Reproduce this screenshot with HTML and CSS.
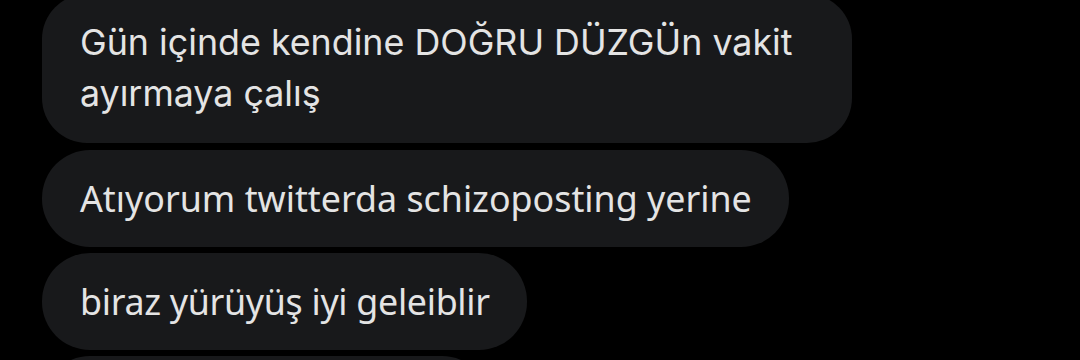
FILE: index.html
```html
<!DOCTYPE html>
<html lang="tr">
<head>
    <meta charset="UTF-8">
    <title>Mesajlar</title>
    <link rel="stylesheet" href="styles.css">
</head>
<body>
    <div class="thread">
        <div class="bubble bubble-first">Gün içinde kendine DOĞRU DÜZGÜn vakit<br>ayırmaya çalış</div>
        <div class="bubble">Atıyorum twitterda schizoposting yerine</div>
        <div class="bubble bubble-short">biraz yürüyüş iyi geleiblir</div>
        <div class="bubble bubble-cut"></div>
    </div>
</body>
</html>
```

FILE: styles.css
```css
* {
    margin: 0;
    padding: 0;
    box-sizing: border-box;
}

body {
    background: #000;
    height: 360px;
    overflow: hidden;
    font-family: "Noto Sans", sans-serif;
}

.thread {
    display: flex;
    flex-direction: column;
    align-items: flex-start;
    gap: 6px;
    margin-top: -6px;
    padding-left: 42px;
}

.bubble {
    background: #18191b;
    color: #e4e4e4;
    font-size: 35.8px;
    line-height: 51px;
    padding: 23px 37px 23px 38px;
    border-radius: 48px;
}

.bubble-first {
    font-family: Inter, sans-serif;
    font-size: 35.8px;
    padding-right: 59px;
    padding-bottom: 24px;
    margin-bottom: 1px;
    border-radius: 45px;
}

.bubble-short {
    letter-spacing: -0.3px;
}

.bubble-cut {
    width: 448px;
    height: 97px;
}
```
